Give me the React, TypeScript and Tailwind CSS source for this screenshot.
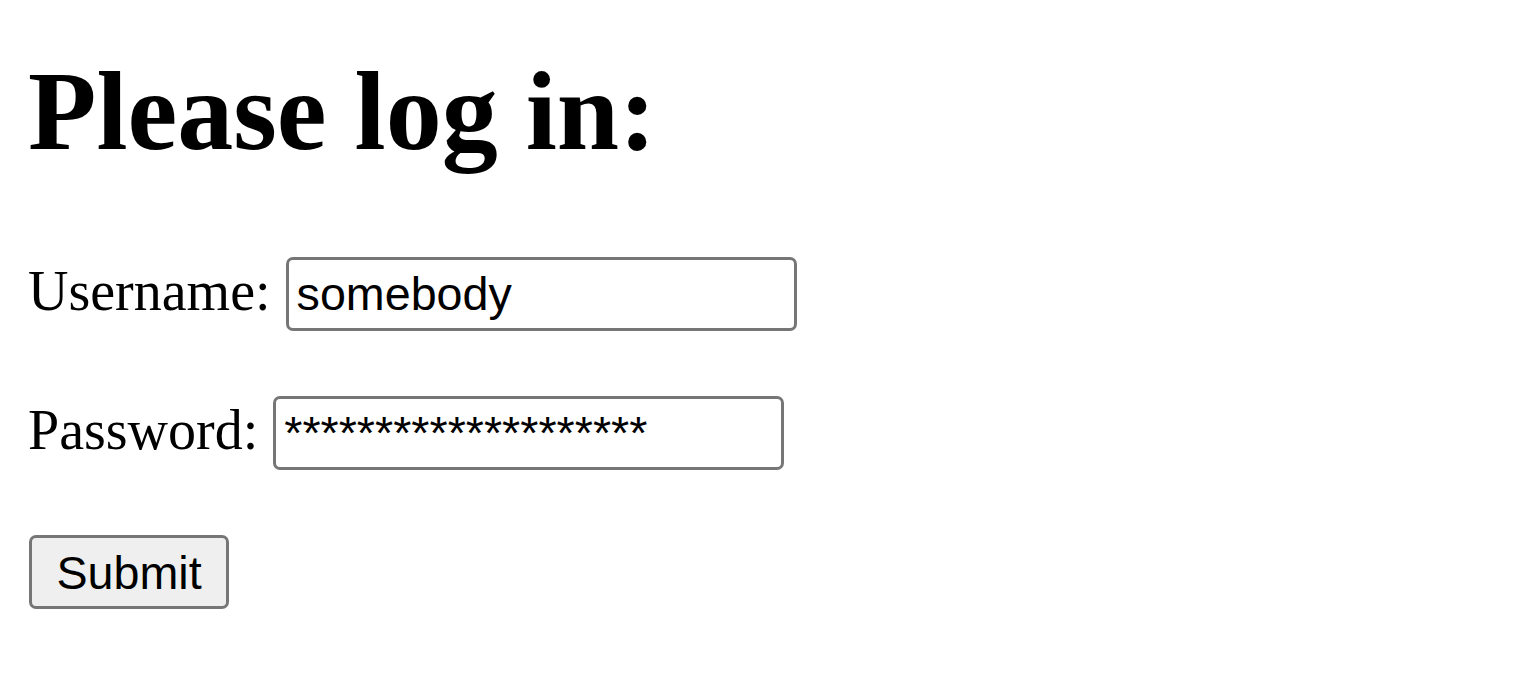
import React from 'react';

const inputClass =
  "w-[511px] h-[74px] border-[3px] border-[#767676] rounded-[7px] bg-white pl-[8px] font-['Liberation_Sans',Arial,sans-serif] text-[46.67px] text-black outline-none";

const App = () => {
  return (
    <div className="min-h-[688px] w-full bg-white px-[28px] pt-px font-['Liberation_Serif','Times_New_Roman',serif] text-black">
      <h1 className="mt-[26px] text-[112px] font-bold leading-normal">Please log in:</h1>

      <form className="mt-[62px] flex flex-col gap-[65px]">
        <div className="flex h-[74px] items-center gap-[15px]">
          <label className="mt-[-6px] text-[56px] leading-normal">Username:</label>
          <input type="text" className={inputClass} defaultValue="somebody" readOnly />
        </div>
        <div className="flex h-[74px] items-center gap-[15px]">
          <label className="mt-[-6px] text-[56px] leading-normal">Password:</label>
          <input type="text" className={inputClass} defaultValue="********************" readOnly />
        </div>
        <div className="flex">
          <button
            type="button"
            className="ml-px h-[74px] w-[200px] rounded-[7px] border-[3px] border-[#767676] bg-[#efefef] font-['Liberation_Sans',Arial,sans-serif] text-[46.67px] text-black"
          >
            Submit
          </button>
        </div>
      </form>
    </div>
  );
};

export default App;
